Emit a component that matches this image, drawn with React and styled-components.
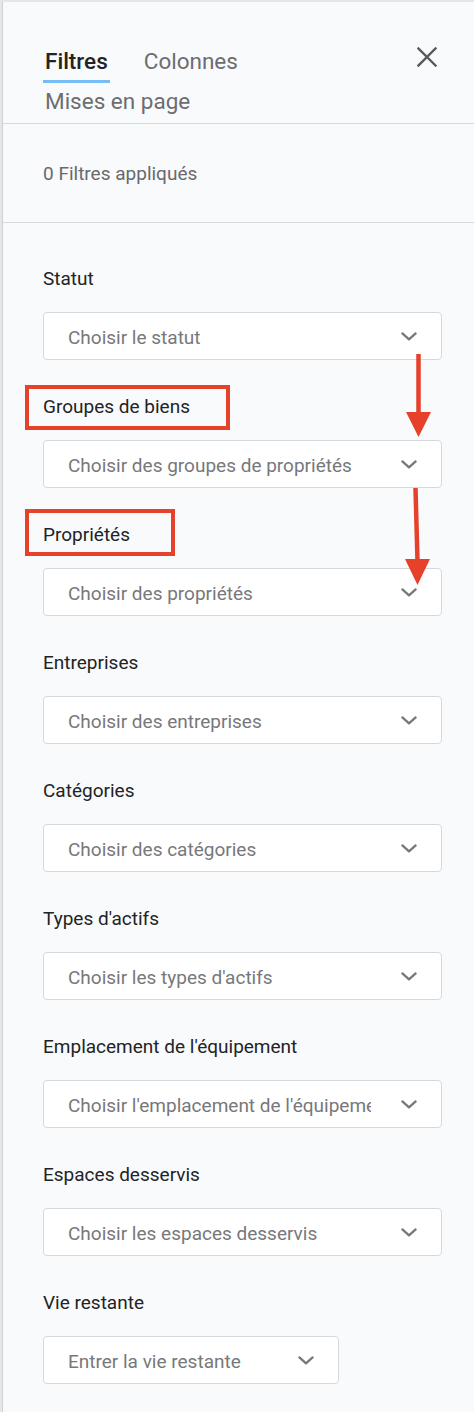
import React from "react";
import styled, { createGlobalStyle } from "styled-components";

const GlobalStyle = createGlobalStyle`
  html, body { margin: 0; padding: 0; }
  body {
    background: #e5e6e8;
    font-family: Roboto, "Noto Sans", "Liberation Sans", sans-serif;
    -webkit-font-smoothing: antialiased;
  }
  * { box-sizing: border-box; }
`;

const Page = styled.div`
  position: relative;
  width: 474px;
  min-height: 1412px;
  padding: 2px 0 0 2px;
  overflow: hidden;
`;

const Panel = styled.aside`
  background: #f9fafc;
  border-left: 1px solid #cfd1d4;
  min-height: 1410px;
`;

const Header = styled.header`
  display: flex;
  align-items: flex-start;
  padding: 40px 35px 0 40px;
  border-bottom: 1px solid #d9dadd;
`;

const TabList = styled.nav`
  flex: 1;
  display: flex;
  flex-wrap: wrap;
  column-gap: 32px;
  row-gap: 7px;
  max-width: 340px;
  margin-top: 8px;
`;

const Tab = styled.div`
  font-size: 22.5px;
  line-height: 23px;
  padding: 0 2px 7px;
  border-bottom: 3px solid ${(p) => (p.$active ? "#74bdf6" : "transparent")};
  color: ${(p) => (p.$active ? "#222325" : "#6c6d70")};
  font-weight: ${(p) => (p.$active ? 500 : 400)};
  white-space: nowrap;
`;

const CloseButton = styled.button`
  width: 24px;
  height: 24px;
  margin: 3px 0 0 auto;
  padding: 0;
  border: 0;
  background: none;
  display: flex;
  align-items: center;
  justify-content: center;
  cursor: pointer;
`;

const Info = styled.div`
  padding: 39px 40px 37px;
  font-size: 19px;
  line-height: 22px;
  color: #68696c;
  border-bottom: 1px solid #d9dadd;
`;

const Filters = styled.div`
  display: flex;
  flex-direction: column;
  padding: 44px 32px 0 40px;
`;

const Field = styled.div`
  display: flex;
  flex-direction: column;
  padding-bottom: 35px;
`;

const Label = styled.label`
  font-size: 19px;
  line-height: 24px;
  color: #222325;
  margin-bottom: 21px;
`;

const Select = styled.div`
  display: flex;
  align-items: center;
  gap: 30px;
  height: 48px;
  width: ${(p) => p.$width || "100%"};
  padding: 0 24px;
  background: #ffffff;
  border: 1px solid #d7d8db;
  border-radius: 4px;
`;

const Placeholder = styled.span`
  flex: 1;
  min-width: 0;
  overflow: hidden;
  white-space: nowrap;
  font-size: 19px;
  line-height: 22px;
  padding-top: 4px;
  color: #77787b;
`;

const Overlay = styled.svg`
  position: absolute;
  left: 0;
  top: 0;
  pointer-events: none;
`;

const Chevron = () => (
  <svg width="16" height="9" viewBox="0 0 16 9" style={{ flex: "none" }}>
    <polyline
      points="1.4,1.4 8,7.4 14.6,1.4"
      fill="none"
      stroke="#77787b"
      strokeWidth="2.3"
      strokeLinecap="round"
      strokeLinejoin="round"
    />
  </svg>
);

const fields = [
  ["Statut", "Choisir le statut"],
  ["Groupes de biens", "Choisir des groupes de propriétés"],
  ["Propriétés", "Choisir des propriétés"],
  ["Entreprises", "Choisir des entreprises"],
  ["Catégories", "Choisir des catégories"],
  ["Types d'actifs", "Choisir les types d'actifs"],
  ["Emplacement de l'équipement", "Choisir l'emplacement de l'équipement"],
  ["Espaces desservis", "Choisir les espaces desservis"],
  ["Vie restante", "Entrer la vie restante", "296px"],
];

export default function App() {
  return (
    <>
      <GlobalStyle />
      <Page>
        <Panel>
          <Header>
            <TabList>
              <Tab $active>Filtres</Tab>
              <Tab>Colonnes</Tab>
              <Tab>Mises en page</Tab>
            </TabList>
            <CloseButton aria-label="Fermer">
              <svg width="20" height="20" viewBox="0 0 20 20">
                <path
                  d="M1.5 1.5 L18.5 18.5 M18.5 1.5 L1.5 18.5"
                  stroke="#58595c"
                  strokeWidth="2.4"
                  strokeLinecap="square"
                />
              </svg>
            </CloseButton>
          </Header>
          <Info>0 Filtres appliqués</Info>
          <Filters>
            {fields.map(([label, ph, w]) => (
              <Field key={label}>
                <Label>{label}</Label>
                <Select $width={w}>
                  <Placeholder>{ph}</Placeholder>
                  <Chevron />
                </Select>
              </Field>
            ))}
          </Filters>
        </Panel>
        <Overlay width="474" height="1412" viewBox="0 0 474 1412">
          <rect x="27" y="387" width="201" height="41" fill="none" stroke="#e5412b" strokeWidth="4" />
          <rect x="27" y="511" width="146" height="43" fill="none" stroke="#e5412b" strokeWidth="4" />
          <line x1="418.5" y1="354" x2="418.5" y2="414" stroke="#e5412b" strokeWidth="4.5" />
          <polygon points="406,412 431,412 418.5,437" fill="#e5412b" />
          <line x1="415.5" y1="488" x2="417.5" y2="561" stroke="#e5412b" strokeWidth="4.5" />
          <polygon points="405,559 430,559 417.5,585" fill="#e5412b" />
        </Overlay>
      </Page>
    </>
  );
}
